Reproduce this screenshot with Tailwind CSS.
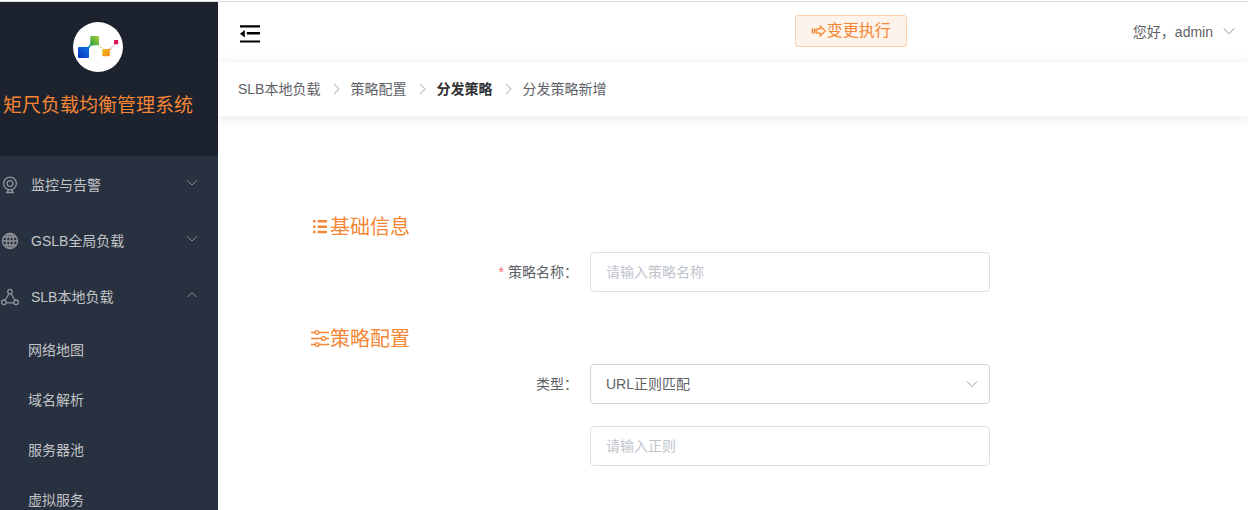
<!DOCTYPE html>
<html lang="zh-CN">
<head>
  <meta charset="UTF-8" />
  <meta name="viewport" content="width=device-width, initial-scale=1.0"/>
  <title>矩尺负载均衡管理系统</title>
  <script src="https://cdn.jsdelivr.net/npm/@tailwindcss/browser@4"></script>
</head>
<body class="h-screen flex flex-col overflow-hidden bg-white text-sm text-[#606266] font-['Liberation_Sans','Noto_Sans_CJK_SC',sans-serif]">

  <!-- Top line -->
  <div class="h-[2px] shrink-0 border-b border-[#dcdfe6]"></div>

  <div class="flex flex-1 min-h-0">

    <!-- Sidebar -->
    <aside class="w-[218px] shrink-0 overflow-hidden bg-[#283140] text-[#c3c4c6]">
      <div class="h-[154px] bg-[#1c222e] pt-5">
        <div class="w-[196px] flex flex-col items-center">
          <svg class="size-[50px]" viewBox="0 0 50 50" role="img" aria-label="logo">
            <defs>
              <linearGradient id="blue" x1="0" y1="1" x2="1" y2="0"><stop offset="0" stop-color="#0a2fc4"/><stop offset="1" stop-color="#0a78dc"/></linearGradient>
              <linearGradient id="green" x1="0" y1="1" x2="1" y2="0"><stop offset="0" stop-color="#2f9e3f"/><stop offset="1" stop-color="#a9cf3a"/></linearGradient>
              <linearGradient id="amber" x1="0" y1="0" x2="1" y2="1"><stop offset="0" stop-color="#f6c21c"/><stop offset="1" stop-color="#f08519"/></linearGradient>
            </defs>
            <circle cx="25" cy="25" r="25" fill="#fff"/>
            <path d="M13 25c3 0 4-2 4.500-5l3 3.300c-3 0-4.500 2-4.500 5z" fill="#1596a8"/>
            <path d="M24 23c3 0 5 2 6 5l1.500-1c-3 0-5-2-5.500-5z" fill="#bfc932"/>
            <path d="M35 27.500c3-1 5.500-3.500 6.500-6l.6.500c-1.500 2-4 4.500-5.600 7z" fill="#ef8a6a"/>
            <rect x="5" y="25" width="11" height="11" rx="1" fill="url(#blue)"/>
            <rect x="17.300" y="14" width="8.700" height="9.300" rx=".8" fill="url(#green)"/>
            <rect x="29.300" y="27" width="7.500" height="7.300" rx=".6" fill="url(#amber)"/>
            <rect x="41" y="18" width="4.200" height="4.200" rx=".4" fill="#d80f57"/>
          </svg>
          <h1 class="mt-[18px] text-[19px] leading-8 text-[#f58634] whitespace-nowrap">矩尺负载均衡管理系统</h1>
        </div>
      </div>

      <nav class="pt-px">
        <button class="flex w-full h-14 items-center gap-[11px] pr-5 text-left">
          <svg class="size-5 text-[#909399]" viewBox="0 0 20 20" fill="none" stroke="currentColor" stroke-width="1.300">
            <circle cx="10" cy="8.500" r="6.400"/><circle cx="10" cy="8.500" r="2.900"/><path d="M8 14.700v1.300l-1.200 1.500h6.400L12 16v-1.300"/>
          </svg>
          <span class="flex-1">监控与告警</span>
          <svg class="size-3 mb-1 text-[#909399]" viewBox="0 0 12 12" fill="none" stroke="currentColor"><path d="M1.500 3.500 6 8l4.500-4.500"/></svg>
        </button>
        <button class="flex w-full h-14 items-center gap-[11px] pr-5 text-left">
          <svg class="size-5 text-[#909399]" viewBox="0 0 20 20" fill="none" stroke="currentColor" stroke-width="1.300">
            <circle cx="10" cy="10" r="7.500"/><ellipse cx="10" cy="10" rx="3.600" ry="7.500"/><path d="M10 2.500v15M2.500 10h15M3.800 6h12.400M3.800 14h12.400"/>
          </svg>
          <span class="flex-1">GSLB全局负载</span>
          <svg class="size-3 mb-1 text-[#909399]" viewBox="0 0 12 12" fill="none" stroke="currentColor"><path d="M1.500 3.500 6 8l4.500-4.500"/></svg>
        </button>
        <button class="flex w-full h-14 items-center gap-[11px] pr-5 text-left">
          <svg class="size-5 text-[#909399]" viewBox="0 0 20 20" fill="none" stroke="currentColor" stroke-width="1.300">
            <circle cx="10" cy="4.600" r="2.300"/><circle cx="3.900" cy="15.300" r="2.300"/><circle cx="16.100" cy="15.300" r="2.300"/><path d="M8.900 6.700 5.100 13.300M11.100 6.700l3.800 6.600M6.200 15.900h7.600"/>
          </svg>
          <span class="flex-1">SLB本地负载</span>
          <svg class="size-3 mb-1 text-[#909399]" viewBox="0 0 12 12" fill="none" stroke="currentColor"><path d="M1.500 8 6 3.500 10.500 8"/></svg>
        </button>
        <a href="#" class="flex h-[50px] items-center pl-7">网络地图</a>
        <a href="#" class="flex h-[50px] items-center pl-7">域名解析</a>
        <a href="#" class="flex h-[50px] items-center pl-7">服务器池</a>
        <a href="#" class="flex h-[50px] items-center pl-7">虚拟服务</a>
      </nav>
    </aside>

    <div class="flex-1 min-w-0 overflow-hidden">

      <!-- Header -->
      <header class="flex h-[60px] items-center pb-[2px] pl-[22px] pr-[13px]">
        <button aria-label="收起菜单" class="mt-[6px] text-black">
          <svg class="w-5 h-[18px]" viewBox="0 0 20 18" fill="currentColor">
            <path d="M0 .2h20v2.200H0zM6.800 7.100H20v2.300H6.800zM0 15.400h20v2.200H0zM0 8.700 4.800 5v7.400z"/>
          </svg>
        </button>
        <button class="ml-auto flex h-8 items-center rounded-[3px] border border-[#fbcfae] bg-[#fef3eb] px-[15px] text-base text-[#f58634]">
          <svg class="size-4" viewBox="0 0 16 16" fill="none" stroke="currentColor" stroke-width="1.200">
            <path d="M1.300 5.500v5" stroke-width="1.300"/><path d="M3.600 5.500v5" stroke-width="2"/><path d="M5.800 5.800h3.500V3.200l5 4.800-5 4.800v-2.600H5.800z"/>
          </svg>
          变更执行
        </button>
        <button class="ml-[226px] mt-[2px] flex items-center gap-[10px] whitespace-nowrap">
          您好，admin
          <svg class="size-3 mb-[2px] text-[#909399]" viewBox="0 0 12 12" fill="none" stroke="currentColor"><path d="M.7 3.500 6 8.800l5.300-5.300"/></svg>
        </button>
      </header>

      <!-- Breadcrumb -->
      <nav class="flex h-[54px] items-center bg-white px-5 shadow-[0_2px_12px_rgba(0,0,0,0.1)]">
        <a href="#">SLB本地负载</a>
        <svg class="mx-2 size-[14px] text-[#c0c4cc]" viewBox="0 0 14 14" fill="none" stroke="currentColor" stroke-width="1.200"><path d="M6 2l5 5-5 5"/></svg>
        <a href="#">策略配置</a>
        <svg class="mx-2 size-[14px] text-[#c0c4cc]" viewBox="0 0 14 14" fill="none" stroke="currentColor" stroke-width="1.200"><path d="M6 2l5 5-5 5"/></svg>
        <a href="#" class="font-bold text-[#303133]">分发策略</a>
        <svg class="mx-2 size-[14px] text-[#c0c4cc]" viewBox="0 0 14 14" fill="none" stroke="currentColor" stroke-width="1.200"><path d="M6 2l5 5-5 5"/></svg>
        <span>分发策略新增</span>
      </nav>

      <!-- Form -->
      <form class="pt-24 pl-[92px] pr-5">
        <h2 class="flex h-[30px] items-center mb-[10px] text-xl text-[#f58634]">
          <svg class="size-5" viewBox="0 0 20 20" fill="currentColor">
            <path d="M3 3h2.400v2.400H3zM3 8.500h2.400v2.400H3zM3 13.800h2.400v2.400H3z"/>
            <rect x="7.500" y="3" width="9.600" height="2.400" rx="1"/><rect x="7.500" y="8.500" width="9.600" height="2.400" rx="1"/><rect x="7.500" y="13.800" width="9.600" height="2.400" rx="1"/>
          </svg>
          基础信息
        </h2>
        <div class="flex items-center">
          <label for="name" class="w-[280px] shrink-0 pr-3 text-right"><span class="mr-1 text-[#f56c6c]">*</span>策略名称：</label>
          <input id="name" type="text" placeholder="请输入策略名称" class="h-10 w-full max-w-[400px] rounded border border-[#dcdfe6] bg-white px-[15px] placeholder:text-[#c0c4cc] focus:outline-none focus:border-[#f58634]"/>
        </div>

        <h2 class="flex h-[30px] items-center mt-8 mb-[10px] text-xl text-[#f58634]">
          <svg class="size-5" viewBox="0 0 20 20" fill="none" stroke="currentColor" stroke-width="1.400">
            <path d="M1 3.500h4M9 3.500h10M1 9.500h10.500M15.500 9.500H19M1 15.500h4M9 15.500h10"/>
            <circle cx="7" cy="3.500" r="1.900"/><circle cx="13.500" cy="9.500" r="1.900"/><circle cx="7" cy="15.500" r="1.900"/>
          </svg>
          策略配置
        </h2>
        <div class="flex items-center">
          <label for="type" class="w-[280px] shrink-0 pr-3 text-right">类型：</label>
          <div class="relative w-full max-w-[400px]">
            <select id="type" class="h-10 w-full appearance-none rounded border border-[#dfd0ca] bg-white px-[15px] focus:outline-none">
              <option>URL正则匹配</option>
            </select>
            <svg class="pointer-events-none absolute right-3 top-[14px] size-3 text-[#c0c4cc]" viewBox="0 0 12 12" fill="none" stroke="currentColor" stroke-width="1.200"><path d="M1 3.500 6 8.500l5-5"/></svg>
          </div>
        </div>
        <div class="mt-[22px] pl-[280px]">
          <input type="text" aria-label="正则" placeholder="请输入正则" class="h-10 w-full max-w-[400px] rounded border border-[#dcdfe6] bg-white px-[15px] placeholder:text-[#c0c4cc] focus:outline-none focus:border-[#f58634]"/>
        </div>
      </form>
    </div>
  </div>
</body>
</html>
